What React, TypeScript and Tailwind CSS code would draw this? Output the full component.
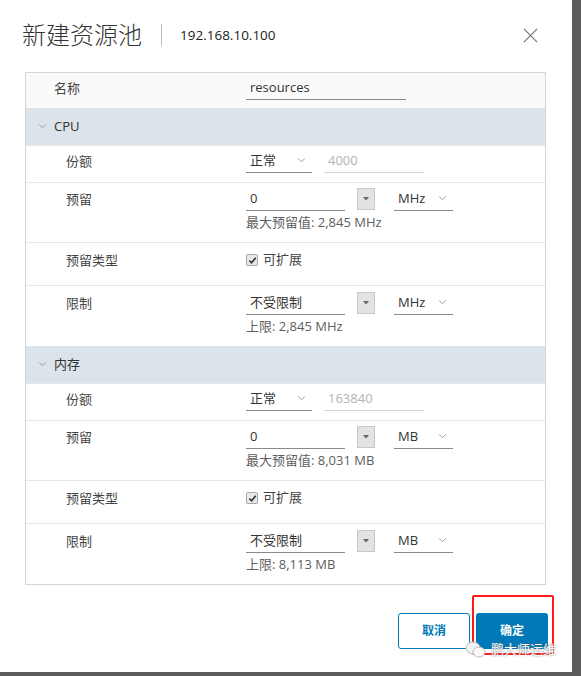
import React from "react";

const font = { fontFamily: '"Open Sans", "Noto Sans CJK SC", sans-serif' };

function Chevron({ className = "" }: { className?: string }) {
  return (
    <svg viewBox="0 0 10 6" className={"w-[9px] h-[5px] " + className} fill="none" stroke="#8c8c8c" strokeWidth="1">
      <path d="M1 0.5 L5 4.5 L9 0.5" />
    </svg>
  );
}

function Select({ value, width }: { value: string; width: string }) {
  return (
    <div className={"flex items-center justify-between h-[24px] border-b border-[#8a8a8a] pl-[4px] pr-[6px] text-[13px] text-[#333] " + width}>
      <span>{value}</span>
      <Chevron />
    </div>
  );
}

function TextInput({ value, width, muted = false }: { value: string; width: string; muted?: boolean }) {
  return (
    <div
      className={
        "flex items-center h-[24px] pl-[4px] text-[13px] " +
        (muted ? "border-b border-[#d4d4d4] text-[#b3b3b3] " : "border-b border-[#8a8a8a] text-[#333] ") +
        width
      }
    >
      {value}
    </div>
  );
}

function SpinButton() {
  return (
    <div className="ml-[12px] w-[18px] h-[22px] bg-[#e3e3e3] border border-[#c8c8c8] flex items-center justify-center">
      <svg viewBox="0 0 6 4" className="w-[6px] h-[4px]">
        <path d="M0 0 L6 0 L3 3.5 Z" fill="#666" />
      </svg>
    </div>
  );
}

function Row({ label, children, className = "" }: { label: string; children: React.ReactNode; className?: string }) {
  return (
    <div className={"flex border-t border-[#e8e8e8] " + className}>
      <div className="w-[220px] pl-[40px] text-[13px] text-[#444] leading-[24px]">{label}</div>
      <div className="flex-1">{children}</div>
    </div>
  );
}

function Header({ label }: { label: string }) {
  return (
    <div className="flex items-center h-[37px] bg-[#dbe4ea] pl-[12px] text-[13px] text-[#333]">
      <Chevron className="mr-[7px]" />
      <span>{label}</span>
    </div>
  );
}

function Section({ title, shares, unit, max, limit }: { title: string; shares: string; unit: string; max: string; limit: string }) {
  return (
    <>
      <Header label={title} />
      <Row label="份额" className="h-[37px] pt-[3px]">
        <div className="flex items-center gap-[12px]">
          <Select value="正常" width="w-[66px]" />
          <TextInput value={shares} width="w-[100px]" muted />
        </div>
      </Row>
      <Row label="预留" className="h-[60px] pt-[4px]">
        <div className="flex items-center">
          <TextInput value="0" width="w-[99px]" />
          <SpinButton />
          <div className="ml-[19px]">
            <Select value={unit} width="w-[59px]" />
          </div>
        </div>
        <div className="text-[13px] text-[#5e5e5e] leading-[16px] mt-[3px]">最大预留值: {max}</div>
      </Row>
      <Row label="预留类型" className="h-[43px] pt-[5px]">
        <div className="flex items-center h-[24px] text-[13px] text-[#444]">
          <span className="w-[12px] h-[12px] rounded-[2px] bg-[#e9e9e9] border border-[#a8a8a8] flex items-center justify-center mr-[5px]">
            <svg viewBox="0 0 10 10" className="w-[9px] h-[9px]">
              <path d="M1.5 5.2 L4 7.6 L8.6 2" fill="none" stroke="#333" strokeWidth="1.8" />
            </svg>
          </span>
          可扩展
        </div>
      </Row>
      <Row label="限制" className="h-[61px] pt-[5px]">
        <div className="flex items-center">
          <TextInput value="不受限制" width="w-[99px]" />
          <SpinButton />
          <div className="ml-[19px]">
            <Select value={unit} width="w-[59px]" />
          </div>
        </div>
        <div className="text-[13px] text-[#5e5e5e] leading-[16px] mt-[3px]">上限: {limit}</div>
      </Row>
    </>
  );
}

export default function App() {
  return (
    <div className="w-[581px] h-[676px] bg-[#5c5c5c] flex" style={font}>
      <div className="relative w-[572px] h-[672px] bg-white flex flex-col">
        {/* title bar */}
        <div className="flex items-center h-[72px] pl-[22px] pr-[34px] pb-[2px]">
          <span className="text-[24px] font-light text-[#333] leading-none">新建资源池</span>
          <span className="w-px h-[22px] bg-[#bdbdbd] ml-[19px] mr-[18px]" />
          <span className="text-[13.5px] text-[#222]">192.168.10.100</span>
          <svg viewBox="0 0 16 16" className="ml-auto w-[15px] h-[15px]" stroke="#777" strokeWidth="1.3">
            <path d="M1 1 L15 15 M15 1 L1 15" />
          </svg>
        </div>

        {/* form table */}
        <div className="mx-[25px] w-[521px] border border-[#d4d4d4]">
          <div className="flex h-[35px] bg-[#fafafa] pt-[3px]">
            <div className="w-[220px] pl-[28px] text-[13px] text-[#444] leading-[24px]">名称</div>
            <TextInput value="resources" width="w-[160px]" />
          </div>
          <Section title="CPU" shares="4000" unit="MHz" max="2,845 MHz" limit="2,845 MHz" />
          <Section title="内存" shares="163840" unit="MB" max="8,031 MB" limit="8,113 MB" />
        </div>

        {/* footer */}
        <div className="flex justify-end gap-[6px] pr-[24px] mt-[28px]">
          <button className="w-[72px] h-[36px] rounded-[3px] border border-[#0079b8] text-[#0079b8] text-[12px] font-semibold">
            取消
          </button>
          <button className="w-[72px] h-[36px] rounded-[3px] bg-[#0079b8] text-white text-[12px] font-semibold">
            确定
          </button>
        </div>

        {/* annotation box */}
        <div className="absolute left-[472px] top-[595px] w-[82px] h-[60px] border-2 border-[#ff1a1a] rounded-[2px]" />
        {/* watermark */}
        <div className="absolute left-[465px] top-[640px] flex items-center gap-[4px] text-[13px] text-white" style={{ textShadow: "0 0 2px #666" }}>
          <svg viewBox="0 0 22 18" className="w-[22px] h-[18px]">
            <ellipse cx="8" cy="7" rx="7" ry="6" fill="#f2f2f2" stroke="#bbb" />
            <ellipse cx="14" cy="11" rx="6" ry="5" fill="#fafafa" stroke="#bbb" />
          </svg>
          <span>鹏大师运维</span>
        </div>
      </div>
    </div>
  );
}
